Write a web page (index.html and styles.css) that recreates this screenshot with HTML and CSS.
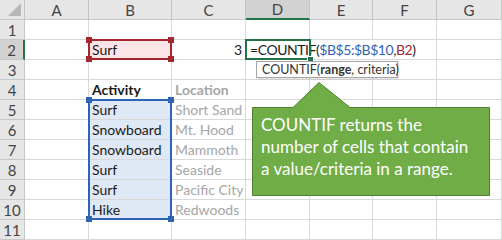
FILE: index.html
```html
<!DOCTYPE html>
<html lang="en">
<head>
  <meta charset="UTF-8" />
  <title>COUNTIF</title>
  <link rel="stylesheet" href="styles.css">
</head>
<body>
  <div class="sheet">
    <div class="grid">
      <!-- column headers -->
      <div class="hd corner"></div><div class="hd">A</div><div class="hd">B</div><div class="hd">C</div><div class="hd sel-col">D</div><div class="hd">E</div><div class="hd">F</div><div class="hd">G</div>

      <div class="rh">1</div><div class="c"></div><div class="c"></div><div class="c"></div><div class="c"></div><div class="c"></div><div class="c"></div><div class="c"></div>

      <div class="rh sel-row">2</div><div class="c"></div><div class="c crit">Surf</div><div class="c num">3</div>
      <div class="c spill formula">=COUNTIF(<span class="ref-blue">$B$5:$B$10</span>,<span class="ref-red">B2</span>)</div><div class="c spill"></div><div class="c"></div><div class="c"></div>

      <div class="rh">3</div><div class="c"></div><div class="c"></div><div class="c"></div><div class="c"></div><div class="c"></div><div class="c"></div><div class="c"></div>

      <div class="rh">4</div><div class="c"></div><div class="c bold">Activity</div><div class="c bold muted">Location</div><div class="c"></div><div class="c"></div><div class="c"></div><div class="c"></div>

      <div class="rh">5</div><div class="c"></div><div class="c range">Surf</div><div class="c muted">Short Sand</div><div class="c"></div><div class="c"></div><div class="c"></div><div class="c"></div>

      <div class="rh">6</div><div class="c"></div><div class="c range">Snowboard</div><div class="c muted">Mt. Hood</div><div class="c"></div><div class="c"></div><div class="c"></div><div class="c"></div>

      <div class="rh">7</div><div class="c"></div><div class="c range">Snowboard</div><div class="c muted">Mammoth</div><div class="c"></div><div class="c"></div><div class="c"></div><div class="c"></div>

      <div class="rh">8</div><div class="c"></div><div class="c range">Surf</div><div class="c muted">Seaside</div><div class="c"></div><div class="c"></div><div class="c"></div><div class="c"></div>

      <div class="rh">9</div><div class="c"></div><div class="c range">Surf</div><div class="c muted">Pacific City</div><div class="c"></div><div class="c"></div><div class="c"></div><div class="c"></div>

      <div class="rh">10</div><div class="c"></div><div class="c range">Hike</div><div class="c muted">Redwoods</div><div class="c"></div><div class="c"></div><div class="c"></div><div class="c"></div>

      <div class="rh">11</div><div class="c"></div><div class="c"></div><div class="c"></div><div class="c"></div><div class="c"></div><div class="c"></div><div class="c"></div>
    </div>

    <!-- range highlights -->
    <div class="box box-red">
      <i class="knob tl"></i><i class="knob tr"></i><i class="knob bl"></i><i class="knob br"></i>
    </div>
    <div class="box box-blue">
      <i class="knob tl"></i><i class="knob tr"></i><i class="knob bl"></i><i class="knob br"></i>
    </div>
    <div class="active"><i class="fill-handle"></i></div>

    <div class="tip">COUNTIF(<b>range</b>, criteria)</div>

    <div class="callout">
      <svg class="callout-shape" width="240" height="116" viewBox="0 0 240 116">
        <path d="M0.5 25.5 H41 L67 0.5 L98 25.5 H237.5 V113.5 H0.5 Z" fill="#70ad47" stroke="#507e32" stroke-width="1"/>
      </svg>
      <p class="callout-text">COUNTIF returns the<br>number of cells that contain<br>a value/criteria in a range.</p>
    </div>
  </div>
</body>
</html>
```

FILE: styles.css
```css
:root {
  --grid: #d9d9d9;
  --head: #e6e6e6;
  --head-line: #c6c6c6;
  --head-sel: #d2d2d2;
  --green: #217346;
  --red: #a5262e;
  --blue: #2f64b4;
}

* {
  box-sizing: border-box;
  margin: 0;
  padding: 0;
}

body {
  background: white;
  font-family: Lato, 'Open Sans', sans-serif;
  color: #1a1a1a;
}

.sheet {
  position: relative;
  width: 502px;
  height: 240px;
  overflow: hidden;
}

.grid {
  display: grid;
  grid-template-columns: 25px 64px 83px 74px 64px 63px 64px 65px;
  grid-auto-rows: 20px;
  font-size: 14px;
}

.hd,
.rh {
  background: var(--head);
  color: #444;
  font-size: 15px;
  display: flex;
  align-items: center;
  justify-content: center;
  border-right: 1px solid var(--head-line);
  border-bottom: 1px solid var(--head-line);
}

.hd.sel-col {
  background: var(--head-sel);
  border-bottom: 2px solid var(--green);
}

.rh.sel-row {
  background: var(--head-sel);
  border-right: 2px solid var(--green);
}

.corner {
  position: relative;
}

.corner::after {
  content: "";
  position: absolute;
  right: 3px;
  bottom: 3px;
  border-left: 13px solid transparent;
  border-bottom: 13px solid #b7b7b7;
}

.c {
  border-right: 1px solid var(--grid);
  border-bottom: 1px solid var(--grid);
  padding: 0 3px;
  line-height: 19px;
  white-space: nowrap;
}

.c.spill {
  border-right-color: transparent;
  overflow: visible;
}

.formula {
  padding-left: 4px;
  letter-spacing: -0.45px;
}

.num {
  text-align: right;
}

.bold {
  font-weight: bold;
}

.muted {
  color: #a6a6a6;
}

.crit {
  background: #fbe5e6;
}

.range {
  background: #dfe8f5;
}

.ref-blue {
  color: var(--blue);
}

.ref-red {
  color: var(--red);
}

/* reference boxes drawn over the cells */
.box {
  position: absolute;
  border: 2px solid;
}

.box-red {
  left: 88px;
  top: 39px;
  width: 84px;
  height: 21px;
  border-color: var(--red);
}

.box-blue {
  left: 88px;
  top: 99px;
  width: 84px;
  height: 121px;
  border-color: var(--blue);
}

.knob {
  position: absolute;
  width: 6px;
  height: 6px;
}

.box-red .knob { background: var(--red); }
.box-blue .knob { background: var(--blue); }

.knob.tl { left: -4px; top: -4px; }
.knob.tr { right: -4px; top: -4px; }
.knob.bl { left: -4px; bottom: -4px; }
.knob.br { right: -4px; bottom: -4px; }

.active {
  position: absolute;
  left: 245px;
  top: 39px;
  width: 66px;
  height: 21px;
  border: 2px solid var(--green);
}

.fill-handle {
  position: absolute;
  right: -5px;
  bottom: -5px;
  width: 7px;
  height: 7px;
  background: var(--green);
  border: 1px solid white;
}

.tip {
  position: absolute;
  left: 256px;
  top: 61px;
  width: 142px;
  height: 17px;
  background: white;
  border: 1px solid #a6a6a6;
  box-shadow: 1px 1px 2px rgba(0, 0, 0, 0.15);
  font-size: 12.5px;
  line-height: 15px;
  padding-left: 5px;
  color: #333;
  white-space: nowrap;
}

.callout {
  position: absolute;
  left: 252px;
  top: 82px;
  width: 240px;
  height: 116px;
}

.callout-shape {
  display: block;
}

.callout-text {
  position: absolute;
  left: 9px;
  top: 32px;
  width: 228px;
  color: white;
  font-size: 17px;
  line-height: 22px;
  white-space: nowrap;
}
```
